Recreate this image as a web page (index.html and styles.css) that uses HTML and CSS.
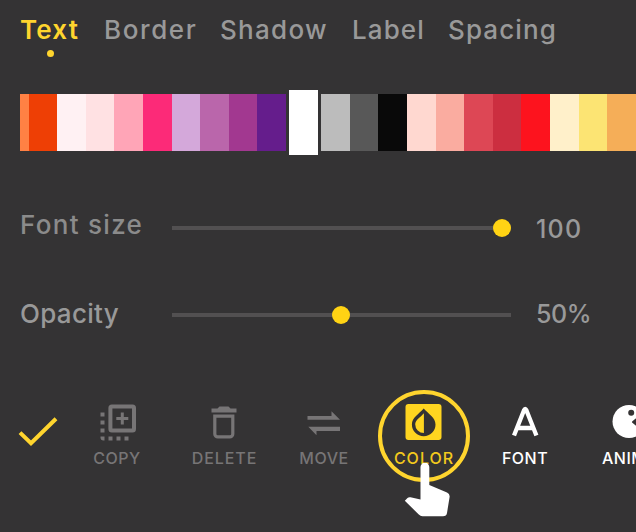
FILE: index.html
```html
<!DOCTYPE html>
<html lang="en">
<head>
<meta charset="utf-8">
<title>Text editor</title>
<link rel="stylesheet" href="styles.css">
</head>
<body>
<main class="editor">
  <nav class="tabs">
    <a class="tab tab-active">Text</a>
    <a class="tab tab-border">Border</a>
    <a class="tab tab-shadow">Shadow</a>
    <a class="tab tab-label">Label</a>
    <a class="tab tab-spacing">Spacing</a>
  </nav>

  <div class="palette">
    <i class="swatch edge"></i><i class="swatch orange"></i><i class="swatch snow"></i><i class="swatch blush"></i><i class="swatch pink"></i><i class="swatch magenta"></i><i class="swatch lilac"></i><i class="swatch orchid"></i><i class="swatch plum"></i><i class="swatch violet"></i><i class="swatch selected"></i><i class="swatch silver"></i><i class="swatch gray"></i><i class="swatch black"></i><i class="swatch peach"></i><i class="swatch salmon"></i><i class="swatch rose"></i><i class="swatch crimson"></i><i class="swatch red"></i><i class="swatch cream"></i><i class="swatch yellow"></i><i class="swatch amber"></i>
  </div>

  <section class="sliders">
    <div class="row row-size">
      <span class="name">Font size</span>
      <span class="track"><i class="knob" style="left: 330px"></i></span>
      <span class="value">100</span>
    </div>
    <div class="row row-opacity">
      <span class="name">Opacity</span>
      <span class="track"><i class="knob" style="left: 169px"></i></span>
      <span class="value">50%</span>
    </div>
  </section>

  <footer class="tools">
    <svg class="check" width="40" height="32" viewBox="0 0 40 32"><path d="M2 15.6 13 26.3 38 1.7"/></svg>
    <div class="tool copy">
      <svg width="40" height="40" viewBox="0 0 40 40">
        <rect x="13.400" y="4.500" width="23.600" height="24" rx="1.500" fill="none" stroke="currentColor" stroke-width="4"/>
        <path d="M25.300 10.500v12M19.300 16.500h12" stroke="currentColor" stroke-width="3"/>
        <path d="M3.500 10.500h4v4h-4zM3.500 18.500h4v4h-4zM3.500 26.500h4v4h-4zM3.500 34.500h4v4h-1a3 3 0 0 1-3-3zM11.500 34.500h4v4h-4zM19.500 34.500h4v4h-4zM27.500 34.500h4v4h-4z" fill="currentColor"/>
      </svg>
      <span>COPY</span>
    </div>
    <div class="tool delete">
      <svg width="40" height="40" viewBox="0 0 40 40">
        <path d="M6.500 6.500h6l2-2h9l2 2h6v4h-25z" fill="currentColor"/>
        <path d="M9.800 14.200h18v17.700a3 3 0 0 1-3 3H12.800a3 3 0 0 1-3-3z" fill="none" stroke="currentColor" stroke-width="3.200"/>
      </svg>
      <span>DELETE</span>
    </div>
    <div class="tool move">
      <svg width="40" height="40" viewBox="0 0 40 40"><path d="M3.500 14h24V9.300L36 17.800H3.500zM36 24.800H4.300l8.200 8.500V29H36z" fill="currentColor"/></svg>
      <span>MOVE</span>
    </div>
    <div class="tool color">
      <svg width="40" height="40" viewBox="0 0 40 40">
        <rect x="1.500" y="2" width="36" height="36" rx="3" fill="#ffd520"/>
        <path d="M19.700 6.500C24.500 12 31.500 15.500 31.500 22.500a11.800 11.800 0 0 1-23.600 0C7.900 15.500 15 12 19.700 6.500z" fill="#343233"/>
        <path d="M19.900 11.300V31a8.700 8.700 0 0 1-8.700-8.700C11.200 18 16.900 15 19.900 11.300z" fill="#ffd520"/>
      </svg>
      <span>COLOR</span>
      <i class="ring"></i>
      <svg class="pointer" width="46" height="54" viewBox="0 0 46 54"><path d="M16.500 4a4.200 4.200 0 0 1 8.800 0V22L43 29.500Q46 31 45.600 34L43 50Q42.500 53.200 39 53.200H18.500Q16.500 53.200 14.500 51.200L.8 37.800 3.500 35Q4.500 34 6.500 34.300L16.500 36.500z" fill="#fff"/></svg>
    </div>
    <div class="tool font">
      <svg width="40" height="40" viewBox="0 0 40 40"><path d="M9 33.500 19 8.200Q20.200 5.500 21.400 8.200L31.400 33.500M13 26H27.500" fill="none" stroke="#fff" stroke-width="4.300" stroke-linejoin="round"/></svg>
      <span>FONT</span>
    </div>
    <div class="tool anim">
      <svg width="40" height="40" viewBox="0 0 40 40"><circle cx="20" cy="19.500" r="16.500" fill="#fff"/><circle cx="22.200" cy="10.700" r="3" fill="#343233"/><path d="M24 20 38 9V31z" fill="#343233" stroke="#343233" stroke-width="2" stroke-linejoin="round"/></svg>
      <span>ANIMATE</span>
    </div>
  </footer>
</main>
</body>
</html>
```
FILE: styles.css
```css
body {
  margin: 0;
  background: #343334;
  font-family: Inter, "Liberation Sans", sans-serif;
  font-weight: 500;
  color: #999;
}

.editor {
  width: 636px;
  height: 532px;
  overflow: hidden;
  display: flex;
  flex-direction: column;
}

.tabs {
  height: 90px;
  padding: 14px 0 0 20px;
  box-sizing: border-box;
  display: grid;
  grid-template-columns: 84px 116px 132px 96px 130px;
  font-size: 26px;
  line-height: 32px;
  white-space: nowrap;
}

.tab-active {
  color: #ffd52e;
  font-weight: 600;
  letter-spacing: 1.2px;
}

.tab-active::after {
  content: "";
  display: block;
  width: 7px;
  height: 7px;
  margin: 3.5px 0 0 26.5px;
  border-radius: 50%;
  background: #ffd52e;
}

.tab-border { letter-spacing: 1.6px; }
.tab-shadow { letter-spacing: 1.3px; }
.tab-label { letter-spacing: 1.1px; }
.tab-spacing { letter-spacing: 1.1px; }

.palette {
  height: 65px;
  padding-left: 20px;
  display: flex;
  align-items: center;
}

.swatch {
  flex: 0 0 28.6px;
  height: 57px;
}

.edge { flex-basis: 8.7px; background: #ff8144; }
.orange { background: #ee3f05; }
.snow { background: #fff1f3; }
.blush { background: #ffe1e3; }
.pink { background: #ffa5b7; }
.magenta { background: #fc2a78; }
.lilac { background: #d4a8da; }
.orchid { background: #ba66ab; }
.plum { background: #a23890; }
.violet { background: #651d8c; }
.selected { flex-basis: 29px; height: 65px; margin: 0 3.3px 0 2.9px; background: #fff; }
.silver { background: #bcbcbc; }
.gray { background: #585858; }
.black { background: #090909; }
.peach { background: #ffd8d0; }
.salmon { background: #faaca0; }
.rose { background: #dd4755; }
.crimson { background: #cc2e40; }
.red { background: #fd131e; }
.cream { background: #fff0ca; }
.yellow { background: #fce473; }
.amber { flex-basis: 30px; background: #f5ae58; }

.sliders {
  height: 229px;
  padding: 56px 0 0 20px;
  box-sizing: border-box;
}

.row {
  height: 32px;
  display: grid;
  grid-template-columns: 152px 339px 120px;
  align-items: center;
  font-size: 26px;
  line-height: 32px;
}

.row-opacity { margin-top: 56px; }
.row-size .name { color: #8b8b8b; letter-spacing: 1.3px; margin-top: -6px; }
.row-opacity .name { letter-spacing: .3px; margin-top: -2px; }

.track {
  position: relative;
  height: 4px;
  background: #525051;
}

.knob {
  position: absolute;
  top: -7px;
  width: 18px;
  height: 18px;
  margin-left: -9px;
  border-radius: 50%;
  background: #ffd314;
}

.value {
  padding-left: 25px;
  font-size: 25px;
  letter-spacing: -.4px;
}

.row-size .value { letter-spacing: 1.2px; margin-top: 2px; }
.row-opacity .value { margin-top: -2px; }

.tools {
  height: 148px;
  padding: 18px 0 0 18px;
  box-sizing: border-box;
  display: flex;
  align-items: flex-start;
}

.check {
  flex: none;
  margin-top: 15px;
  fill: none;
  stroke: #ffd52e;
  stroke-width: 4;
}

.tool {
  position: relative;
  flex: none;
  display: flex;
  flex-direction: column;
  align-items: center;
  font-size: 16px;
  line-height: 20px;
  letter-spacing: .5px;
  color: #777576;
}

.tool > span { margin-top: 6px; }

.copy { width: 118px; }
.delete { width: 97px; letter-spacing: .9px; }
.move { width: 102px; }
.color { width: 98px; color: #f3c91d; letter-spacing: 1px; }
.font { width: 104px; color: #fff; }
.anim { width: 109px; margin-left: -3px; color: #fff; }
.anim > span { padding-left: 23px; }

.ring {
  position: absolute;
  left: 3px;
  top: -12px;
  width: 84px;
  height: 84px;
  border: 4px solid #ffd52e;
  border-radius: 50%;
}

.pointer {
  position: absolute;
  left: 28.5px;
  top: 61px;
}
```
